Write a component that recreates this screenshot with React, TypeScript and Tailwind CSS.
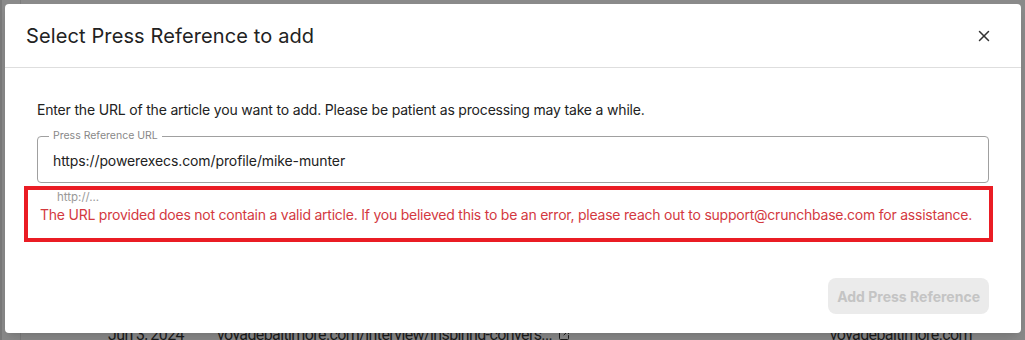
import React from 'react';
import { X, SquareArrowOutUpRight } from 'lucide-react';

function PageBehind() {
  // the table behind the dialog, dimmed by the overlay
  return (
    <div className="absolute inset-0 flex flex-col justify-end bg-[#8a8a8a]">
      <div className="absolute left-0 top-0 h-full w-[2px] bg-[#7a7a7a]" />
      <div className="absolute left-[20px] top-0 h-full w-px bg-[#7d7d7d]" />
      <div
        className="-mb-[6px] flex h-[20px] items-start text-[16px] leading-[18px] tracking-[-0.6px] text-[#1c1c1c]"
        style={{ fontFamily: 'Roboto, sans-serif' }}
      >
        <span className="ml-[108px] w-[109px] shrink-0">Jun 3, 2024</span>
        <span className="flex shrink-0 items-center gap-[6px]">
          voyagebaltimore.com/interview/inspiring-convers...
          <SquareArrowOutUpRight className="h-3 w-3" />
        </span>
        <span className="ml-auto mr-[53px]">voyagebaltimore.com</span>
      </div>
    </div>
  );
}

export default function App() {
  return (
    <div
      className="relative h-[340px] w-[1025px] overflow-hidden"
      style={{ fontFamily: 'Inter, "Noto Sans", sans-serif' }}
    >
      <PageBehind />

      <div className="absolute left-[5px] top-[4px] flex h-[329px] w-[1016px] flex-col rounded-[4px] bg-white shadow-lg">
        <div className="flex h-[64px] items-center justify-between border-b border-[#dedede] pl-[21px] pr-[28px]">
          <h2 className="text-[20px] font-normal tracking-[0.12px] text-[#222]">Select Press Reference to add</h2>
          <button className="text-[#333]">
            <X className="h-[18px] w-[18px]" strokeWidth={2} />
          </button>
        </div>

        <div className="flex flex-1 flex-col px-[32px] pt-[32px]">
          <p className="text-[14px] leading-[20px] tracking-[-0.18px] text-[#222]">
            Enter the URL of the article you want to add. Please be patient as processing may take a while.
          </p>

          <fieldset className="mt-[11px] h-[52px] rounded-[4px] border border-[#a0a0a0] px-[11px]">
            <legend className="px-[4px] text-[10.5px] leading-[10px] text-[#888]">Press Reference URL</legend>
            <div className="pl-[4px] pt-[9px] text-[14px] tracking-[-0.1px] text-[#222]">
              https://powerexecs.com/profile/mike-munter
            </div>
          </fieldset>

          <div className="-ml-[13px] -mr-[4px] mt-[3px] border-[4px] border-[#ea1c24] px-[12px] pb-[14px] pt-[1px]">
            <div className="pl-[17px] text-[11.5px] leading-[12px] text-[#999]">http://...</div>
            <div className="mt-[3px] whitespace-nowrap text-[14px] leading-[18px] tracking-[-0.23px] text-[#d3393f]">
              The URL provided does not contain a valid article. If you believed this to be an error, please reach out to support@crunchbase.com for assistance.
            </div>
          </div>

          <div className="mt-auto flex justify-end pb-[19px]">
            <button className="h-[36px] rounded-[8px] bg-[#ebebeb] px-[9px] text-[14px] font-bold text-[#c4c4c4]" disabled>
              Add Press Reference
            </button>
          </div>
        </div>
      </div>
    </div>
  );
}
